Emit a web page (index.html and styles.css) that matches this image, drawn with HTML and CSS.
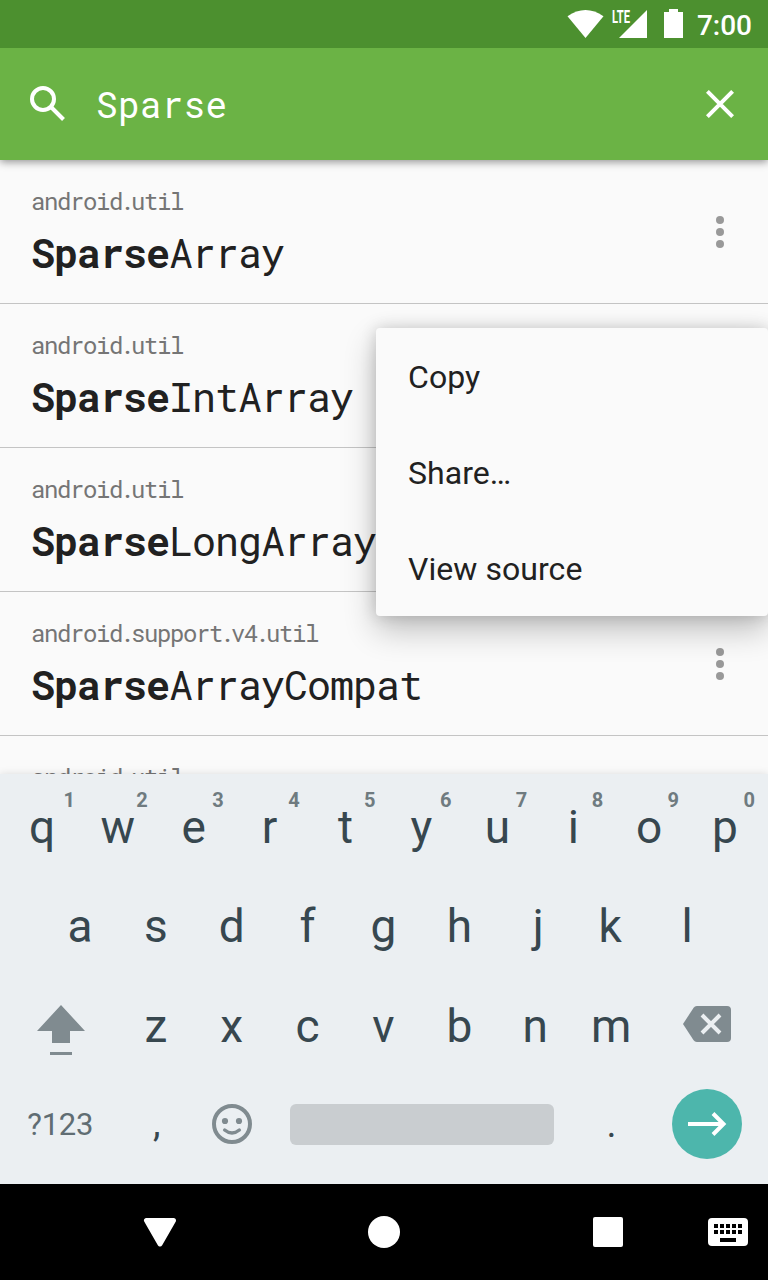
FILE: index.html
```html
<!DOCTYPE html>
<html lang="en">
<head>
<meta charset="utf-8">
<title>Sparse</title>
<link rel="stylesheet" href="styles.css">
</head>
<body>
<div class="screen">
  <header class="status-bar">
    <svg class="status-icons" width="120" height="48" viewBox="566 0 120 48">
      <path d="M567.5 16.2Q585.5 3.8 603.5 16.2L585.5 38Z"/>
      <text class="lte" x="612" y="23" textLength="18" lengthAdjust="spacingAndGlyphs">LTE</text>
      <path d="M647 10V38H619Z"/>
      <path d="M664 12H669V9H678V12H683V38H664Z"/>
    </svg>
    <time class="clock">7:00</time>
  </header>
  <div class="search-bar">
    <svg class="search-icon" width="36" height="36" viewBox="29 85 36 36"><circle cx="43" cy="99" r="11"/><path d="M51.5 107.5L63.5 119.5"/></svg>
    <div class="query">Sparse</div>
    <svg class="close-icon" width="28" height="28" viewBox="0 0 28 28"><path d="M1.4 1.4L26.6 26.6M26.6 1.4L1.4 26.6"/></svg>
  </div>
  <main class="results">
    <article class="result"><div class="label"><p class="package">android<span class="dot">.</span>util</p><p class="name"><b>Sparse</b>Array</p></div>
      <svg class="more" width="8" height="32" viewBox="0 0 8 32"><circle cx="4" cy="4" r="4"/><circle cx="4" cy="16" r="4"/><circle cx="4" cy="28" r="4"/></svg></article>
    <article class="result"><div class="label"><p class="package">android<span class="dot">.</span>util</p><p class="name"><b>Sparse</b>IntArray</p></div></article>
    <article class="result"><div class="label"><p class="package">android<span class="dot">.</span>util</p><p class="name"><b>Sparse</b>LongArray</p></div></article>
    <article class="result"><div class="label"><p class="package">android<span class="dot">.</span>support<span class="dot">.</span>v4<span class="dot">.</span>util</p><p class="name"><b>Sparse</b>ArrayCompat</p></div>
      <svg class="more" width="8" height="32" viewBox="0 0 8 32"><circle cx="4" cy="4" r="4"/><circle cx="4" cy="16" r="4"/><circle cx="4" cy="28" r="4"/></svg></article>
    <article class="result"><div class="label"><p class="package">android<span class="dot">.</span>util</p></div></article>
  </main>
  <div class="menu">
    <div class="menu-item">Copy</div>
    <div class="menu-item">Share…</div>
    <div class="menu-item">View source</div>
  </div>
  <section class="keyboard">
    <div class="keys">
      <div class="key">q<span class="hint one">1</span></div><div class="key">w<span class="hint">2</span></div><div class="key">e<span class="hint">3</span></div><div class="key">r<span class="hint">4</span></div><div class="key">t<span class="hint">5</span></div><div class="key">y<span class="hint">6</span></div><div class="key">u<span class="hint">7</span></div><div class="key">i<span class="hint">8</span></div><div class="key">o<span class="hint">9</span></div><div class="key">p<span class="hint">0</span></div>
    </div>
    <div class="keys">
      <div class="key">a</div><div class="key">s</div><div class="key">d</div><div class="key">f</div><div class="key">g</div><div class="key">h</div><div class="key key-j">j</div><div class="key key-k">k</div><div class="key">l</div>
    </div>
    <div class="keys third">
      <div class="key wide"><svg class="shift" width="48" height="50" viewBox="37 1005 48 50"><path d="M61 1005L85 1031H70V1043H52V1031H37ZM50 1052H72V1055H50Z"/></svg></div>
      <div class="key">z</div><div class="key">x</div><div class="key">c</div><div class="key">v</div><div class="key">b</div><div class="key">n</div><div class="key">m</div>
      <div class="key wide"><svg class="backspace" width="48" height="36" viewBox="0 0 48 36"><path d="M13.8 0H44Q48 0 48 4V32Q48 36 44 36H13.8Q11.8 36 10.6 34.2L0 18L10.6 1.8Q11.8 0 13.8 0Z"/><path class="cross" d="M19 9L37 27M37 9L19 27"/></svg></div>
    </div>
    <div class="keys bottom">
      <div class="key wide symbols">?123</div>
      <div class="key comma">,</div>
      <div class="key"><svg class="smile" width="40" height="40" viewBox="0 0 40 40"><circle class="line" cx="20" cy="20" r="18"/><circle cx="13" cy="17" r="3.1"/><circle cx="27" cy="17" r="3.1"/><path class="line mouth" d="M12.7 26Q20 32 27.3 26"/></svg></div>
      <div class="space-key"><div class="space"></div></div>
      <div class="key period">.</div>
      <div class="key wide"><div class="enter"><svg width="40" height="26" viewBox="0 0 40 26"><path d="M1 13H36M26 2.5L36.5 13L26 23.5"/></svg></div></div>
    </div>
  </section>
  <nav class="nav-bar">
    <div class="nav-cell"><svg width="34" height="32" viewBox="0 0 34 32"><path class="back" d="M3.5 4.5H30.5L17 28Z"/></svg></div>
    <div class="nav-cell"><div class="home"></div></div>
    <div class="nav-cell"><div class="recent"></div></div>
    <svg class="ime" width="40" height="28" viewBox="0 0 40 28"><rect width="40" height="28" rx="4"/><path class="holes" d="M6 8H34M6 14H34"/><path class="bar" d="M12 20H28V24H12Z"/></svg>
  </nav>
</div>
</body>
</html>
```
FILE: styles.css
```css
* { box-sizing: border-box; }
body { margin: 0; font-family: Roboto, sans-serif; }
p { margin: 0; }
svg { display: block; flex: none; }
.screen { position: relative; width: 768px; height: 1280px; overflow: hidden; display: flex; flex-direction: column; background: #fafafa; }

.status-bar { position: relative; z-index: 2; flex: none; height: 48px; display: flex; justify-content: flex-end; align-items: center; padding-right: 16px; gap: 11px; background: #4c902f; color: #fff; }
.status-icons { fill: #fff; }
.lte { font: 700 18px Roboto, sans-serif; }
.clock { font-size: 28px; font-weight: 500; line-height: 46px; padding-top: 3px; }

.search-bar { position: relative; z-index: 1; flex: none; height: 112px; display: flex; align-items: center; padding: 0 34px 0 29px; background: #6bb345; color: #fff; box-shadow: 0 2px 8px rgba(0,0,0,.42); }
.search-icon, .close-icon { fill: none; stroke: #fff; stroke-width: 4; }
.search-icon { margin-top: -2px; }
.query { flex: 1; margin: -1px 0 0 31px; font: 36px/48px "Roboto Mono", "DejaVu Sans Mono", monospace; letter-spacing: .3px; }

.results { flex: none; height: 614px; overflow: hidden; }
.result { height: 144px; display: flex; justify-content: space-between; padding: 25px 44px 0 31px; border-bottom: 1px solid #c4c4c4; }
.package, .name { font-family: "Roboto Mono", "DejaVu Sans Mono", monospace; white-space: nowrap; }
.package { font-size: 24px; line-height: 32px; letter-spacing: -1.41px; color: #757575; }
.dot { margin: 0 -2px; }
.name { margin-top: 8px; font-size: 40px; line-height: 56px; letter-spacing: -1px; color: #212121; }
.more { margin-top: 31px; fill: #999; }

.menu { position: absolute; z-index: 2; left: 376px; top: 328px; width: 392px; height: 288px; border-radius: 4px; background: #fafafa; box-shadow: 0 14px 32px rgba(0,0,0,.24), 0 0 16px rgba(0,0,0,.16); }
.menu-item { height: 96px; padding: 1px 32px 0; font-size: 32px; line-height: 96px; letter-spacing: .06px; color: #212121; }

.keyboard { flex: none; height: 410px; padding: 4px 4px 0; background: #ebeff2; box-shadow: 0 0 8px rgba(0,0,0,.12); color: #37474f; }
.keys { display: flex; justify-content: center; width: 759px; height: 99px; }
.key { position: relative; flex: none; width: 75.9px; display: flex; align-items: center; justify-content: center; padding-bottom: 1px; font-size: 46px; line-height: 54px; }
.wide { width: 113.9px; }
.hint { position: absolute; top: 10px; right: 8px; font-size: 20px; line-height: 24px; font-weight: 700; color: #6f7b80; }
.one { right: 5px; }
.key-j { padding-left: 6px; }
.key-k { padding-right: 2px; }
.third .key { padding: 1px 0 0; }
.third .wide { padding-top: 8px; }
.third .wide:last-child { padding: 0 0 4px 2px; }
.shift, .backspace, .smile { fill: #808b90; }
.cross { fill: none; stroke: #ebeff2; stroke-width: 4; }
.line { fill: none; stroke: #808b90; stroke-width: 4; }
.mouth { stroke-width: 3.5; stroke-linecap: round; }
.bottom .key { padding-bottom: 2px; }
.bottom .wide:last-child { padding-left: 2px; }
.bottom .symbols { padding: 1px 1px 0 0; font-size: 31px; letter-spacing: -.3px; color: #606d73; }
.comma, .period { font-size: 38px; }
.bottom .comma { padding: 0 0 4px 2px; }
.space-key { flex: none; width: 304px; display: flex; align-items: center; padding: 0 19px 0 21px; }
.space { width: 264px; height: 41px; border-radius: 6px; background: #c9cdd0; }
.enter { width: 70px; height: 70px; border-radius: 50%; background: #4db6ac; display: flex; align-items: center; justify-content: center; }
.enter svg { fill: none; stroke: #fff; stroke-width: 4; }

.nav-bar { flex: none; position: relative; height: 96px; display: flex; align-items: center; padding-left: 48px; background: #000; }
.nav-cell { flex: none; width: 224px; display: flex; justify-content: center; }
.back { fill: #fff; stroke: #fff; stroke-width: 5; stroke-linejoin: round; }
.home { width: 32px; height: 32px; border-radius: 50%; background: #fff; }
.recent { width: 30px; height: 30px; border-radius: 2px; background: #fff; }
.ime { margin-left: -12px; fill: #fff; }
.holes { fill: none; stroke: #000; stroke-width: 4; stroke-dasharray: 4 2; }
.bar { fill: #000; }
```
